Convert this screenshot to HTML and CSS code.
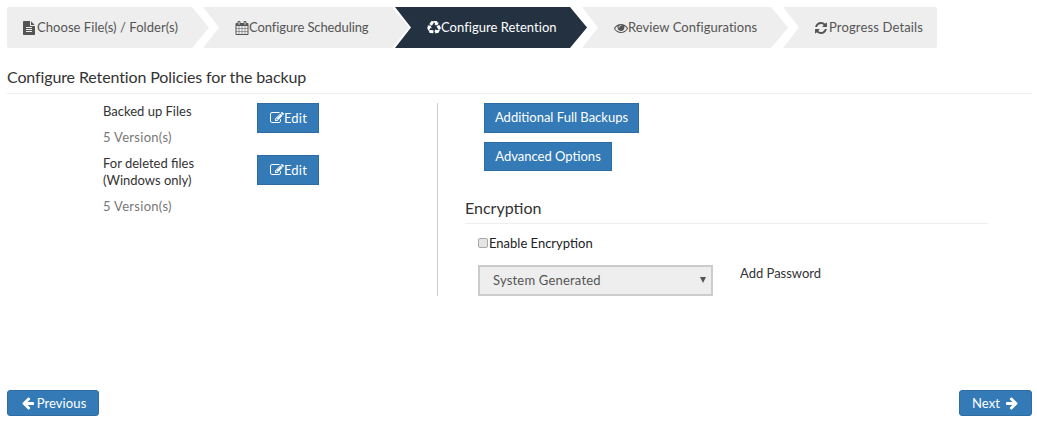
FILE: index.html
```html
<!DOCTYPE html>
<html lang="en">
<head>
<meta charset="utf-8">
<title>Configure Retention</title>
<link rel="stylesheet" href="styles.css">
</head>
<body>
<nav class="steps">
  <div class="step step-1"><svg class="ico" viewBox="0 0 1792 1792"><path d="M1596 476q14 14 28 36h-472v-472q22 14 36 28zm-476 164h544v1056q0 40-28 68t-68 28h-1344q-40 0-68-28t-28-68v-1600q0-40 28-68t68-28h800v544q0 40 28 68t68 28zm160 736v-64q0-14-9-23t-23-9h-704q-14 0-23 9t-9 23v64q0 14 9 23t23 9h704q14 0 23-9t9-23zm0-256v-64q0-14-9-23t-23-9h-704q-14 0-23 9t-9 23v64q0 14 9 23t23 9h704q14 0 23-9t9-23zm0-256v-64q0-14-9-23t-23-9h-704q-14 0-23 9t-9 23v64q0 14 9 23t23 9h704q14 0 23-9t9-23z"/></svg><span>Choose File(s) / Folder(s)</span></div>
  <div class="step step-2"><svg class="ico" viewBox="0 0 1792 1792"><path d="M192 1664h288v-288h-288v288zm352 0h320v-288h-320v288zm-352-352h288v-320h-288v320zm352 0h320v-320h-320v320zm-352-384h288v-288h-288v288zm736 736h320v-288h-320v288zm-384-736h320v-288h-320v288zm768 736h288v-288h-288v288zm-384-352h320v-320h-320v320zm-352-864v-288q0-13-9.5-22.5t-22.5-9.5h-64q-13 0-22.5 9.5t-9.5 22.5v288q0 13 9.5 22.5t22.5 9.5h64q13 0 22.5-9.5t9.5-22.5zm736 864h288v-320h-288v320zm-384-384h320v-288h-320v288zm384 0h288v-288h-288v288zm32-480v-288q0-13-9.5-22.5t-22.5-9.5h-64q-13 0-22.5 9.5t-9.5 22.5v288q0 13 9.5 22.5t22.5 9.5h64q13 0 22.5-9.5t9.5-22.5zm384-64v1280q0 52-38 90t-90 38h-1408q-52 0-90-38t-38-90v-1280q0-52 38-90t90-38h128v-96q0-66 47-113t113-47h64q66 0 113 47t47 113v96h384v-96q0-66 47-113t113-47h64q66 0 113 47t47 113v96h128q52 0 90 38t38 90z"/></svg><span>Configure Scheduling</span></div>
  <div class="step step-3 active"><svg class="ico" viewBox="0 0 1792 1792"><path d="M836 1169l-15 368-2 22-420-29q-36-3-67-31.5t-47-65.5q-11-27-14.5-55t4-65 12-55 21.5-64 19-53q78 12 509 28zm-387-586l180 379-147-92q-63 72-111.5 144.5t-72.5 125-39.5 94.5-18.5 63l-4 21-190-357q-17-26-18-56t6-47l8-18q35-63 114-188l-140-86zm1231 517l-188 359q-12 29-36.5 46.5t-43.5 20.5l-18 4q-71 7-219 12l8 164-230-367 211-362 7 173q170 16 283 5t170-33zm-785-924q-47 63-265 435l-317-187-19-12 225-356q20-31 60-45t80-10q24 2 48.5 12t42 21 41.5 33 36 34.5 36 39.5 32 35zm655 307l212 363q18 37 12.5 76t-27.5 74q-13 20-33 37t-38 28-48.5 22-47 16-51.5 14-46 12q-34-72-265-436l313-195zm-143-226l142-83-220 373-419-20 151-86q-34-89-75-166t-75.5-123.5-64.5-80-47-46.5l-17-13 405 1q31-3 58 10.5t39 28.5l11 15q39 61 112 190z"/></svg><span>Configure Retention</span></div>
  <div class="step step-4"><svg class="ico" viewBox="0 0 1792 1792"><path d="M1664 960q-152-236-381-353 61 104 61 225 0 185-131.5 316.5t-316.5 131.5-316.5-131.5-131.5-316.5q0-121 61-225-229 117-381 353 133 205 333.5 326.5t434.5 121.5 434.5-121.5 333.5-326.5zm-720-384q0-20-14-34t-34-14q-125 0-214.5 89.5t-89.5 214.5q0 20 14 34t34 14 34-14 14-34q0-86 61-147t147-61q20 0 34-14t14-34zm848 384q0 34-20 69-140 230-376.5 368.5t-499.5 138.5-499.5-139-376.5-368q-20-35-20-69t20-69q140-229 376.5-368t499.5-139 499.5 139 376.5 368q20 35 20 69z"/></svg><span>Review Configurations</span></div>
  <div class="step step-5"><svg class="ico" viewBox="0 0 1792 1792"><path d="M1639 1056q0 5-1 7-64 268-268 434.5t-478 166.5q-146 0-282.5-55t-243.5-157l-129 129q-19 19-45 19t-45-19-19-45v-448q0-26 19-45t45-19h448q26 0 45 19t19 45-19 45l-137 137q71 66 161 102t187 36q134 0 250-65t186-179q11-17 53-117 8-23 30-23h192q13 0 22.5 9.5t9.5 22.5zm25-800v448q0 26-19 45t-45 19h-448q-26 0-45-19t-19-45 19-45l138-138q-148-137-349-137-134 0-250 65t-186 179q-11 17-53 117-8 23-30 23h-199q-13 0-22.5-9.5t-9.5-22.5v-7q65-268 270-434.5t480-166.5q146 0 284 55.5t245 156.5l130-129q19-19 45-19t45 19 19 45z"/></svg><span>Progress Details</span></div>
</nav>

<h1 class="page-title">Configure Retention Policies for the backup</h1>

<main class="columns">
  <section class="left">
    <div class="policy">
      <div class="policy-text">
        <p class="policy-name">Backed up Files</p>
        <p class="policy-value">5 Version(s)</p>
      </div>
      <button class="btn btn-edit" type="button"><svg class="ico" viewBox="0 0 1792 1792"><path d="M888 1184l116-116-152-152-116 116v56h96v96h56zm440-720q-16-16-33 1l-350 350q-17 17-1 33t33-1l350-350q17-17 1-33zm80 594v190q0 119-84.5 203.5t-203.5 84.5h-832q-119 0-203.5-84.5t-84.5-203.5v-832q0-119 84.5-203.5t203.5-84.5h832q63 0 117 25 15 7 18 23 3 17-9 29l-49 49q-14 14-32 8-23-6-45-6h-832q-66 0-113 47t-47 113v832q0 66 47 113t113 47h832q66 0 113-47t47-113v-126q0-13 9-22l64-64q15-15 35-7t20 29zm-96-738l288 288-672 672h-288v-288zm444 132l-92 92-288-288 92-92q28-28 68-28t68 28l152 152q28 28 28 68t-28 68z"/></svg>Edit</button>
    </div>
    <div class="policy">
      <div class="policy-text">
        <p class="policy-name">For deleted files<br>(Windows only)</p>
        <p class="policy-value">5 Version(s)</p>
      </div>
      <button class="btn btn-edit" type="button"><svg class="ico" viewBox="0 0 1792 1792"><path d="M888 1184l116-116-152-152-116 116v56h96v96h56zm440-720q-16-16-33 1l-350 350q-17 17-1 33t33-1l350-350q17-17 1-33zm80 594v190q0 119-84.5 203.5t-203.5 84.5h-832q-119 0-203.5-84.5t-84.5-203.5v-832q0-119 84.5-203.5t203.5-84.5h832q63 0 117 25 15 7 18 23 3 17-9 29l-49 49q-14 14-32 8-23-6-45-6h-832q-66 0-113 47t-47 113v832q0 66 47 113t113 47h832q66 0 113-47t47-113v-126q0-13 9-22l64-64q15-15 35-7t20 29zm-96-738l288 288-672 672h-288v-288zm444 132l-92 92-288-288 92-92q28-28 68-28t68 28l152 152q28 28 28 68t-28 68z"/></svg>Edit</button>
    </div>
  </section>

  <section class="right">
    <div class="actions">
      <button class="btn btn-wide btn-tall" type="button">Additional Full Backups</button>
      <button class="btn btn-wide" type="button">Advanced Options</button>
    </div>
    <h2 class="section-title">Encryption</h2>
    <div class="encryption">
      <label class="check"><input type="checkbox">Enable Encryption</label>
      <div class="select-row">
        <div class="select-wrap">
          <select class="select" disabled><option>System Generated</option></select>
          <span class="select-arrow"></span>
        </div>
        <span class="add-password">Add Password</span>
      </div>
    </div>
  </section>
</main>

<footer class="footer">
  <button class="btn btn-nav btn-prev" type="button"><svg class="ico" viewBox="0 0 1792 1792"><path d="M1664 896v128q0 53-32.5 90.5t-84.5 37.5h-704l293 294q38 36 38 90t-38 90l-75 76q-37 37-90 37-52 0-91-37l-651-652q-37-37-37-90 0-52 37-91l651-650q38-38 91-38 52 0 90 38l75 74q38 38 38 91t-38 91l-293 293h704q52 0 84.5 37.5t32.5 90.5z"/></svg>Previous</button>
  <button class="btn btn-nav btn-next" type="button">Next<svg class="ico" viewBox="0 0 1792 1792"><path d="M1600 960q0 54-37 91l-651 651q-39 37-91 37-51 0-90-37l-75-75q-38-38-38-91t38-91l293-293h-704q-52 0-84.5-37.5t-32.5-90.5v-128q0-53 32.5-90.5t84.5-37.5h704l-293-294q-38-36-38-90t38-90l75-75q38-38 90-38 53 0 91 38l651 651q37 35 37 90z"/></svg></button>
</footer>
</body>
</html>
```
FILE: styles.css
```css
* { box-sizing: border-box; }
html, body { margin: 0; height: 421px; overflow: hidden; }
body {
  background: #fff;
  font-family: Lato, "Open Sans", sans-serif;
  font-size: 13px;
  line-height: 17px;
  color: #333;
  padding: 7px 5px 0 7px;
  display: flex;
  flex-direction: column;
}
p, h1, h2 { margin: 0; font-weight: 400; }
.ico { width: 14px; height: 14px; fill: currentColor; flex: none; }

/* wizard */
.steps { display: flex; height: 41px; color: #555; }
.step {
  display: flex;
  align-items: center;
  background: #eee;
  clip-path: polygon(0 0, calc(100% - 17px) 0, 100% 50%, calc(100% - 17px) 100%, 0 100%, 16px 50%);
  margin-right: -6px;
}
.step-1 .ico, .step-5 .ico { margin: 0 1px 0 -1px; }
.step-1 { width: 202px; padding-left: 16px; letter-spacing: .05px; clip-path: polygon(0 0, calc(100% - 17px) 0, 100% 50%, calc(100% - 17px) 100%, 0 100%); border-radius: 2px 0 0 2px; }
.step-2 { width: 206px; padding-left: 32px; margin-right: -14px; letter-spacing: -.1px; }
.step-3 { width: 192px; padding-left: 32px; margin-right: -5px; letter-spacing: .03px; background: #233140; color: #fff; }
.step-4 { width: 206px; padding-left: 32px; margin-right: -5px; letter-spacing: .05px; }
.step-5 { width: 154px; padding-left: 32px; margin-right: 0; letter-spacing: .15px; clip-path: polygon(0 0, 100% 0, 100% 100%, 0 100%, 16px 50%); border-radius: 0 2px 2px 0; }

.page-title {
  font-size: 16px;
  line-height: 20px;
  letter-spacing: -.12px;
  color: #333;
  margin-top: 19px;
  padding-bottom: 6px;
  border-bottom: 1px solid #eee;
}

/* columns */
.columns { display: flex; margin-top: 9px; height: 193px; padding-left: 96px; }
.left { width: 335px; border-right: 1px solid #d2cdc8; display: flex; flex-direction: column; }
.policy { display: flex; align-items: flex-start; height: 52px; }
.policy-text { width: 154px; }
.policy-name { color: #333; }
.policy-value { color: #777; margin-top: 9px; letter-spacing: .3px; }
.right { padding-left: 27px; flex: 1; }
.actions { display: flex; flex-direction: column; align-items: flex-start; gap: 9px; padding-left: 19px; }
.btn {
  font: inherit;
  color: #fff;
  background: #337ab7;
  border: 1px solid #2e6da4;
  display: inline-flex;
  align-items: center;
  justify-content: center;
  padding: 0 10px;
  white-space: nowrap;
}
.btn-edit { width: 62px; height: 30px; letter-spacing: .2px; padding: 0 0 0 1px; }
.btn-wide { height: 29px; width: 128px; }
.btn-tall { height: 30px; width: 155px; padding-bottom: 2px; }
.section-title {
  font-size: 16px;
  line-height: 20px;
  margin-top: 27px;
  padding-bottom: 5px;
  border-bottom: 1px solid #eee;
  width: 523px;
  color: #333;
}
.encryption { padding-left: 13px; }
.check { display: flex; align-items: center; color: #222; margin-top: 11px; height: 17px; }
.check input {
  appearance: none;
  margin: 0 1px 2px 0;
  width: 10px;
  height: 10px;
  background: #e4e4e4;
  border: 1px solid #a8a8a8;
  border-radius: 2px;
}
.select-row { display: flex; margin-top: 13px; align-items: flex-start; }
.select-wrap { position: relative; width: 235px; height: 31px; }
.select {
  appearance: none;
  width: 100%;
  height: 100%;
  font: inherit;
  letter-spacing: .2px;
  opacity: 1;
  color: #555;
  background: #eee;
  border: 2px solid #ccc;
  padding: 0 13px;
}
.select-arrow {
  position: absolute;
  right: 7px;
  top: 12px;
  border-left: 3px solid transparent;
  border-right: 3px solid transparent;
  border-top: 6px solid #555;
}
.add-password { margin-left: 27px; }

.footer { display: flex; justify-content: space-between; margin-top: 94px; }
.btn-nav { height: 26px; border-radius: 3px; padding: 0; letter-spacing: .1px; }
.btn-nav .ico { margin: 0 2px 0 0; }
.btn-prev { width: 92px; padding-left: 1px; }
.btn-next { width: 73px; }
.btn-next .ico { margin: 0 0 0 5px; }
```
